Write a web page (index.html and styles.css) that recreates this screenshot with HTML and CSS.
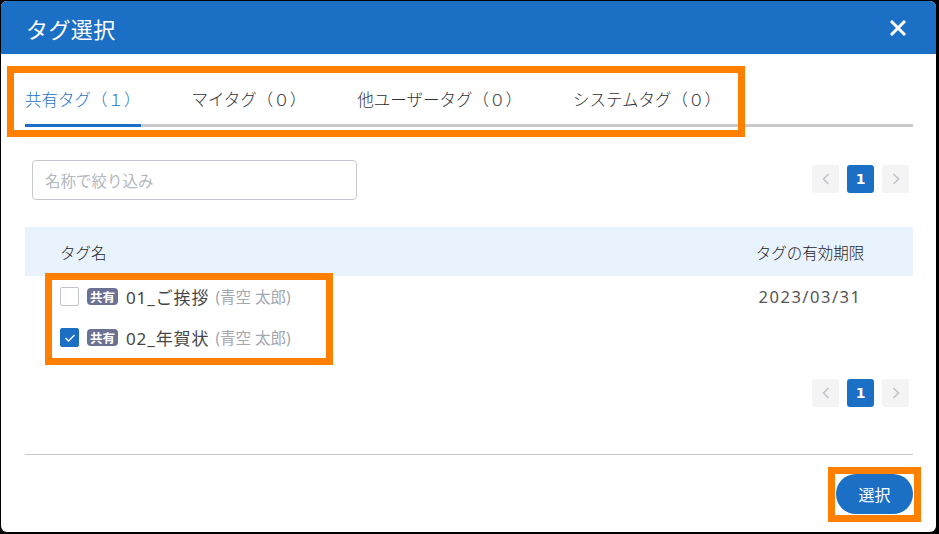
FILE: index.html
```html
<!DOCTYPE html>
<html lang="ja">
<head>
    <meta charset="UTF-8">
    <title>タグ選択</title>
    <link rel="stylesheet" href="styles.css">
</head>
<body>
    <div class="dialog">
        <div class="dialog-header">
            <span class="dialog-title">タグ選択</span>
            <svg class="close" width="16" height="16" viewBox="0 0 16 16"><path d="M2 2L14 14M14 2L2 14" stroke="#fff" stroke-width="3" stroke-linecap="square"/></svg>
        </div>
        <div class="dialog-body">
            <div class="tabs">
                <div class="tab active">共有タグ（１）</div>
                <div class="tab">マイタグ（０）</div>
                <div class="tab">他ユーザータグ（０）</div>
                <div class="tab">システムタグ（０）</div>
            </div>

            <div class="filter-row">
                <input class="filter" type="text" placeholder="名称で絞り込み">
                <div class="pager">
                    <span class="pg-btn"><svg width="8" height="12" viewBox="0 0 8 12"><path d="M6.5 1L1.5 6L6.5 11" fill="none" stroke="#c0c4cc" stroke-width="1.6"/></svg></span>
                    <span class="pg-num">1</span>
                    <span class="pg-btn"><svg width="8" height="12" viewBox="0 0 8 12"><path d="M1.5 1L6.5 6L1.5 11" fill="none" stroke="#c0c4cc" stroke-width="1.6"/></svg></span>
                </div>
            </div>

            <div class="table">
                <div class="thead">
                    <span class="col-name">タグ名</span>
                    <span class="col-date">タグの有効期限</span>
                </div>
                <div class="row">
                    <div class="col-name">
                        <span class="check"></span>
                        <span class="badge">共有</span>
                        <span class="tag-name">01_ご挨拶</span>
                        <span class="owner">(青空 太郎)</span>
                    </div>
                    <span class="col-date date">2023/03/31</span>
                </div>
                <div class="row">
                    <div class="col-name">
                        <span class="check checked"><svg width="12" height="10" viewBox="0 0 12 10"><path d="M1.5 5L4.5 8L10.5 2" fill="none" stroke="#fff" stroke-width="1.3"/></svg></span>
                        <span class="badge">共有</span>
                        <span class="tag-name">02_年賀状</span>
                        <span class="owner">(青空 太郎)</span>
                    </div>
                    <span class="col-date date"></span>
                </div>
            </div>

            <div class="pager bottom">
                <span class="pg-btn"><svg width="8" height="12" viewBox="0 0 8 12"><path d="M6.5 1L1.5 6L6.5 11" fill="none" stroke="#c0c4cc" stroke-width="1.6"/></svg></span>
                <span class="pg-num">1</span>
                <span class="pg-btn"><svg width="8" height="12" viewBox="0 0 8 12"><path d="M1.5 1L6.5 6L1.5 11" fill="none" stroke="#c0c4cc" stroke-width="1.6"/></svg></span>
            </div>

            <div class="footer">
                <button class="btn-select">選択</button>
            </div>
        </div>
    </div>

    <!-- annotation boxes -->
    <div class="mark mark-tabs"></div>
    <div class="mark mark-rows"></div>
    <div class="mark mark-btn"></div>
</body>
</html>
```

FILE: styles.css
```css
* { box-sizing: border-box; }
body {
    margin: 0; height: 534px; background: #000; position: relative;
    font-family: "Noto Sans", "Noto Sans CJK JP", sans-serif; color: #333;
}
.dialog {
    margin: 1px 3px 0 1px; height: 531px; background: #fff;
    border-radius: 6px; overflow: hidden;
}
.dialog-header {
    height: 53px; background: #1b6fc4; color: #fff;
    display: flex; align-items: center; justify-content: space-between;
    padding: 0 30px 0 25px;
}
.dialog-title { font-size: 22px; letter-spacing: 0.4px; }
.close { display: block; margin-top: 1px; }

.dialog-body { padding: 0 23px 0 24px; }

.tabs {
    display: flex; gap: 51px; margin-top: 21px;
    border-bottom: 3px solid #c8c9cd;
}
.tab {
    position: relative; font-size: 16.5px; line-height: 49px; color: #303133;
    font-family: "Noto Sans CJK JP", sans-serif; font-weight: 300;
}
.tab.active { color: #1f72c6; }
.tab.active::after {
    content: ""; position: absolute; left: 0; right: 0; bottom: -3px;
    height: 3px; background: #1b6fc4;
}

.filter-row {
    display: flex; align-items: center; justify-content: space-between;
    margin-top: 33px; padding: 0 4px 0 7px;
}
.filter {
    width: 325px; height: 40px; border: 1px solid #c6c9d0; border-radius: 4px;
    padding: 0 12px; font-size: 15.5px; font-family: "Noto Sans CJK JP", sans-serif;
    outline: none;
}
.filter::placeholder { color: #b4b8c0; }

.pager { display: flex; gap: 8px; margin-top: -2px; }
.pager.bottom { justify-content: flex-end; padding-right: 4px; margin-top: 21px; }
.pg-btn, .pg-num {
    width: 27px; height: 28px; border-radius: 3px;
    display: flex; align-items: center; justify-content: center;
}
.pg-btn { background: #f4f4f5; }
.pg-num {
    background: #1b6fc4; color: #fff; font-size: 14px; font-weight: 700;
    font-family: "DejaVu Sans", sans-serif;
}

.table { margin-top: 27px; }
.thead {
    height: 49px; background: #e9f3fd; display: flex; align-items: center;
    justify-content: space-between; padding: 0 23px 0 35px;
    font-family: "Noto Sans CJK JP", sans-serif; font-size: 15.5px; color: #1d1d1f;
    font-weight: 300;
}
.row {
    height: 41px; display: flex; align-items: center; justify-content: space-between;
    padding: 0 23px 0 35px;
}
.col-name { display: flex; align-items: center; }
.col-date { width: 160px; text-align: center; }
.check {
    width: 19px; height: 19px; border: 1px solid #c0c4cc; border-radius: 2px;
    margin-right: 8px; display: flex; align-items: center; justify-content: center;
}
.check.checked { background: #1b6fc4; border-color: #1b6fc4; }
.badge {
    width: 31px; height: 17px; border-radius: 4px; background: #6b7192; color: #fff;
    font-size: 12.5px; font-weight: 700; line-height: 17px; text-align: center;
    font-family: "Noto Sans CJK JP", sans-serif; margin-right: 8px;
}
.tag-name { font-size: 17px; color: #454545; margin-right: 6px; letter-spacing: 0.9px; }
.owner { font-size: 15.5px; color: #a4a7ae; }
.date { font-size: 16.5px; color: #555; letter-spacing: 1.5px; }

.footer {
    margin-top: 47px; border-top: 1px solid #c6c7cc;
    display: flex; justify-content: flex-end; padding-top: 19px;
}
.btn-select {
    width: 77px; height: 40px; border: none; border-radius: 20px;
    background: #1b6fc4; color: #fff; font-size: 16px;
    font-family: "Noto Sans CJK JP", sans-serif;
}

.mark { position: absolute; border: 7px solid #ff8000; }
.mark-tabs { left: 7px; top: 66px; width: 738px; height: 71px; }
.mark-rows { left: 45px; top: 273px; width: 288px; height: 92px; }
.mark-btn { left: 828px; top: 467px; width: 93px; height: 55px; }
```
